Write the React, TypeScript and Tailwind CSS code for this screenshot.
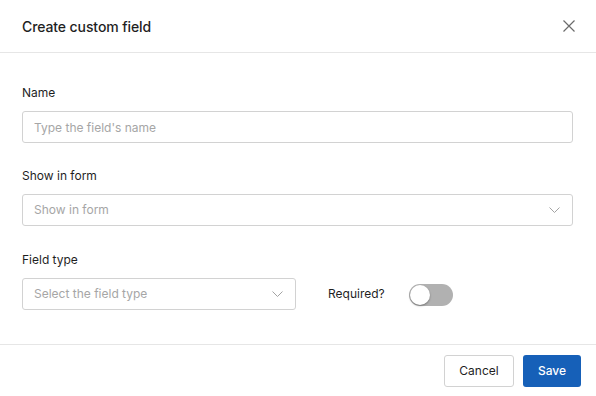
import { useState } from "react";

function Chevron() {
  return (
    <svg width="11" height="6" viewBox="0 0 11 6" fill="none" className="shrink-0">
      <path d="M0.5 0.5 L5.5 5.5 L10.5 0.5" stroke="#a3a3a3" strokeWidth="1" />
    </svg>
  );
}

function SelectBox({ placeholder, className }: { placeholder: string; className?: string }) {
  return (
    <div
      className={`flex h-[32px] items-center justify-between rounded-[3px] border border-[#d2d2d2] bg-white pl-[11px] pr-[12px] ${className ?? ""}`}
    >
      <span className="text-[12px] text-[#a6a6a6]">{placeholder}</span>
      <Chevron />
    </div>
  );
}

function Label({ children }: { children: React.ReactNode }) {
  return <div className="mb-[10px] text-[12px] leading-4 text-[#1f1f1f]">{children}</div>;
}

export default function App() {
  const [required, setRequired] = useState(false);

  return (
    <div className="flex h-[396px] w-[596px] flex-col bg-white font-['Inter',sans-serif] text-[#1f1f1f]">
      <div className="flex h-[53px] items-center justify-between border-b border-[#e6e6e6] pl-[22px] pr-[20px]">
        <h2 className="text-[14px] font-medium tracking-[-0.1px]">Create custom field</h2>
        <button className="flex h-[14px] w-[14px] items-center justify-center">
          <svg width="12" height="12" viewBox="0 0 12 12" fill="none">
            <path d="M0.5 0.5 L11.5 11.5 M11.5 0.5 L0.5 11.5" stroke="#6b6b6b" strokeWidth="1.2" />
          </svg>
        </button>
      </div>

      <div className="flex flex-col gap-[24px] pb-[34px] pl-[22px] pr-[23px] pt-[32px]">
        <div>
          <Label>Name</Label>
          <input
            placeholder="Type the field's name"
            className="h-[32px] w-full rounded-[3px] border border-[#d2d2d2] px-[11px] text-[12px] outline-none placeholder:text-[#a6a6a6]"
          />
        </div>

        <div className="pt-[1px]">
          <Label>Show in form</Label>
          <SelectBox placeholder="Show in form" />
        </div>

        <div className="pt-[2px]">
          <Label>Field type</Label>
          <div className="flex items-center">
            <SelectBox placeholder="Select the field type" className="w-[274px]" />
            <span className="ml-[32px] text-[12px]">Required?</span>
            <button
              onClick={() => setRequired(!required)}
              className={`relative ml-[24px] mt-[2px] h-[22px] w-[44px] rounded-full ${required ? "bg-[#1660b8]" : "bg-[#b1b1b1]"}`}
            >
              <span
                className={`absolute top-[1px] h-[20px] w-[20px] rounded-full bg-white shadow-[0_1px_2px_rgba(0,0,0,0.35)] ${required ? "left-[23px]" : "left-[1px]"}`}
              />
            </button>
          </div>
        </div>
      </div>

      <div className="flex flex-1 items-center justify-end gap-[9px] border-t border-[#e6e6e6] pr-[15px]">
        <button className="h-[32px] w-[70px] rounded-[3px] border border-[#d2d2d2] bg-white text-[12px] text-[#1f1f1f]">
          Cancel
        </button>
        <button className="h-[32px] w-[58px] rounded-[3px] bg-[#1660b8] text-[12px] font-medium text-white">
          Save
        </button>
      </div>
    </div>
  );
}
